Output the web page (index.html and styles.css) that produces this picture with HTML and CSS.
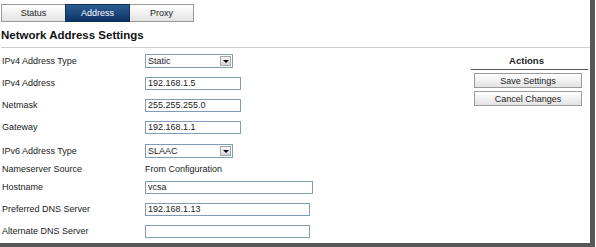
FILE: index.html
```html
<!DOCTYPE html>
<html lang="en">
<head>
    <meta charset="UTF-8">
    <title>Network Address Settings</title>
    <link rel="stylesheet" href="styles.css">
</head>
<body>
    <div class="window">
        <div class="tabs">
            <div class="tab">Status</div>
            <div class="tab active">Address</div>
            <div class="tab">Proxy</div>
        </div>

        <h1 class="title">Network Address Settings</h1>

        <div class="content">
            <div class="form">
                <div class="row">
                    <label>IPv4 Address Type</label>
                    <div class="select"><span>Static</span><span class="select-btn"></span></div>
                </div>
                <div class="row">
                    <label>IPv4 Address</label>
                    <input class="field w-sm" value="192.168.1.5">
                </div>
                <div class="row">
                    <label>Netmask</label>
                    <input class="field w-sm" value="255.255.255.0">
                </div>
                <div class="row">
                    <label>Gateway</label>
                    <input class="field w-sm" value="192.168.1.1">
                </div>
                <div class="row gap">
                    <label>IPv6 Address Type</label>
                    <div class="select"><span>SLAAC</span><span class="select-btn"></span></div>
                </div>
                <div class="row short">
                    <label>Nameserver Source</label>
                    <span>From Configuration</span>
                </div>
                <div class="row">
                    <label>Hostname</label>
                    <input class="field w-lg" value="vcsa">
                </div>
                <div class="row">
                    <label>Preferred DNS Server</label>
                    <input class="field w-md" value="192.168.1.13">
                </div>
                <div class="row">
                    <label>Alternate DNS Server</label>
                    <input class="field w-md" value="">
                </div>
            </div>

            <div class="actions">
                <div class="actions-title">Actions</div>
                <button>Save Settings</button>
                <button>Cancel Changes</button>
            </div>
        </div>
    </div>
</body>
</html>
```

FILE: styles.css
```css
body {
    margin: 0;
    font-family: "Liberation Sans", Arial, sans-serif;
    font-size: 9px;
    color: #222;
    background-color: #fff;
}
.window {
    width: 590px;
    height: 243px;
    overflow: hidden;
    border-right: 5px solid #575757;
    border-bottom: 4px solid #575757;
}
.tabs {
    display: flex;
    margin: 4px 0 0 1px;
}
.tab {
    width: 65px;
    height: 18px;
    line-height: 16px;
    box-sizing: border-box;
    border: 1px solid #9a9a9a;
    margin-right: -1px;
    text-align: center;
    background: linear-gradient(#ffffff, #e2e2e2);
}
.tab.active {
    position: relative;
    color: #fff;
    border-color: #0e2f5a;
    background: linear-gradient(#2d5d92, #0c3466);
}
.title {
    margin: 6px 0 0 1px;
    padding-bottom: 5px;
    border-bottom: 1px solid #cfcfcf;
    font-size: 11.5px;
    line-height: 14px;
    font-weight: bold;
    color: #111;
}
.content {
    display: flex;
}
.form {
    flex: 1;
    padding: 2px 0 0 2px;
}
.row {
    display: flex;
    align-items: center;
    height: 22px;
}
.row.gap {
    margin-top: 2px;
}
.row.short {
    height: 14px;
}
.row label {
    width: 143px;
}
.field {
    box-sizing: border-box;
    height: 13px;
    margin: 0;
    padding: 0 2px;
    border: 1px solid #7f9db9;
    font: inherit;
    color: #222;
}
.w-sm {
    width: 96px;
}
.w-md {
    width: 165px;
}
.w-lg {
    width: 168px;
}
.select {
    display: flex;
    align-items: center;
    justify-content: space-between;
    box-sizing: border-box;
    width: 88px;
    height: 14px;
    padding-left: 2px;
    border: 1px solid #7f9db9;
}
.select-btn {
    display: flex;
    align-items: center;
    justify-content: center;
    box-sizing: border-box;
    width: 11px;
    height: 10px;
    margin-right: 1px;
    border: 1px solid #a8a8a8;
    background: linear-gradient(#f6f6f6, #d6d6d6);
}
.select-btn::after {
    content: "";
    border-left: 3px solid transparent;
    border-right: 3px solid transparent;
    border-top: 3px solid #000;
}
.actions {
    width: 117px;
    margin-right: 2px;
}
.actions-title {
    margin-top: 6px;
    padding: 0 6px 1px 0;
    border-bottom: 1px solid #555;
    line-height: 14px;
    text-align: center;
    font-weight: bold;
    font-size: 9.5px;
}
.actions button {
    display: block;
    width: 108px;
    height: 15px;
    margin: 3px 0 0 3px;
    padding: 0;
    border: 1px solid #9c9c9c;
    background: linear-gradient(#ffffff, #e3e3e3);
    font: inherit;
    color: #222;
}
```
